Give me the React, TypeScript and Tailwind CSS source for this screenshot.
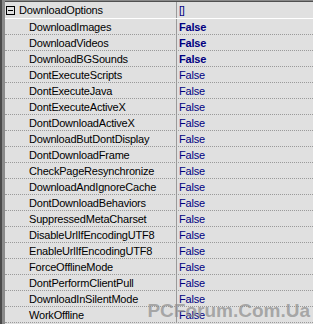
const rows: { name: string; value: string; bold?: boolean }[] = [
  { name: 'DownloadImages', value: 'False', bold: true },
  { name: 'DownloadVideos', value: 'False', bold: true },
  { name: 'DownloadBGSounds', value: 'False', bold: true },
  { name: 'DontExecuteScripts', value: 'False' },
  { name: 'DontExecuteJava', value: 'False' },
  { name: 'DontExecuteActiveX', value: 'False' },
  { name: 'DontDownloadActiveX', value: 'False' },
  { name: 'DownloadButDontDisplay', value: 'False' },
  { name: 'DontDownloadFrame', value: 'False' },
  { name: 'CheckPageResynchronize', value: 'False' },
  { name: 'DownloadAndIgnoreCache', value: 'False' },
  { name: 'DontDownloadBehaviors', value: 'False' },
  { name: 'SuppressedMetaCharset', value: 'False' },
  { name: 'DisableUrlIfEncodingUTF8', value: 'False' },
  { name: 'EnableUrlIfEncodingUTF8', value: 'False' },
  { name: 'ForceOfflineMode', value: 'False' },
  { name: 'DontPerformClientPull', value: 'False' },
  { name: 'DownloadInSilentMode', value: 'False' },
  { name: 'WorkOffline', value: 'False' },
];

export default function App() {
  return (
    <div
      className="relative flex w-[313px] h-[324px] overflow-hidden bg-[#e0e0e0] text-[11px] tracking-[-0.2px] leading-none"
      style={{ fontFamily: '"Liberation Sans", Arial, sans-serif' }}
    >
      {/* left gutter */}
      <div className="w-[5px] shrink-0 border-l-2 border-[#4a4a4a] bg-[#8a8a8a]" />

      <div className="flex flex-1 flex-col">
        <div className="h-[2px] shrink-0 border-t border-[#8a8a8a] bg-[#505050]" />

        {/* category row */}
        <div className="flex h-[17px] shrink-0 border-b border-white">
          <div className="flex w-[171px] items-center pl-px pt-px">
            <div className="flex h-[9px] w-[9px] items-center justify-center border border-black bg-[#e0e0e0]">
              <div className="h-px w-[5px] bg-black" />
            </div>
            <span className="ml-[4px] text-black">DownloadOptions</span>
          </div>
          <div className="w-px bg-[#9a9a9a]" />
          <div className="flex items-center pl-[2px] pt-px text-[#000080]">[]</div>
        </div>

        {rows.map((r) => (
          <div key={r.name} className="flex h-[16px] shrink-0 border-b border-dotted border-[#9a9a9a]">
            <div className="flex w-[171px] items-center pl-[24px] pt-px text-black">{r.name}</div>
            <div className="w-px bg-[#9a9a9a]" />
            <div
              className={
                r.bold
                  ? 'flex items-center pl-[2px] pt-px font-bold text-[#000080]'
                  : 'flex items-center pl-[2px] pt-px text-[#000080]'
              }
            >
              {r.value}
            </div>
          </div>
        ))}
      </div>

      {/* watermark */}
      <div className="absolute right-[3px] bottom-[4px] text-[19px] font-bold tracking-normal text-[#8c8c8c]/70">
        PCForum.Com.Ua
      </div>
    </div>
  );
}
